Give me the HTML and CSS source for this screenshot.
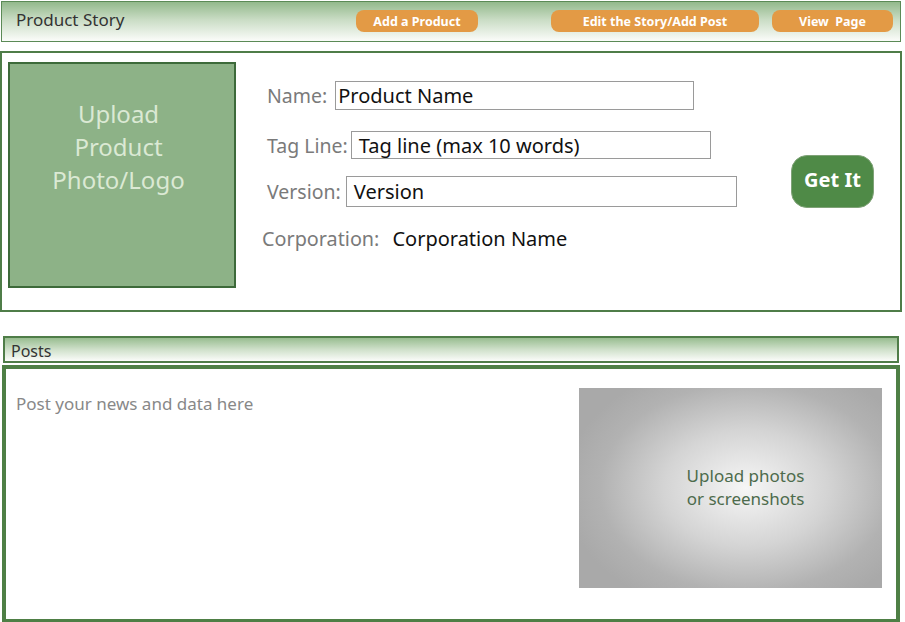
FILE: index.html
```html
<!DOCTYPE html>
<html>
<head>
<meta charset="utf-8">
<link rel="stylesheet" href="styles.css">
</head>
<body>
<div class="page">
  <header class="topbar">
    <span class="topbar-title">Product Story</span>
    <button class="pill pill-add">Add a Product</button>
    <button class="pill pill-edit">Edit the Story/Add Post</button>
    <button class="pill pill-view">View&nbsp; Page</button>
  </header>

  <section class="story">
    <div class="logo-box">Upload<br>Product<br>Photo/Logo</div>
    <div class="fields">
      <div class="row row-name"><span class="label">Name:</span><div class="field field-name">Product Name</div></div>
      <div class="row row-tag"><span class="label">Tag Line:</span><div class="field field-tag">Tag line (max 10 words)</div></div>
      <div class="row row-version"><span class="label">Version:</span><div class="field field-version">Version</div></div>
      <div class="row row-corp"><span class="label">Corporation:</span><span class="value">Corporation Name</span></div>
    </div>
    <button class="get-it">Get It</button>
  </section>

  <div class="posts-bar">Posts</div>
  <section class="posts">
    <div class="posts-text">Post your news and data here</div>
    <div class="shots">Upload photos<br>or screenshots</div>
  </section>
</div>
</body>
</html>
```

FILE: styles.css
```css
* { box-sizing: border-box; }
html, body { margin: 0; padding: 0; background: #fff; }
body { font-family: "Noto Sans", "Open Sans", sans-serif; width: 905px; height: 622px; overflow: hidden; }
.page { padding-top: 1px; }

.topbar {
  margin-left: 1px;
  width: 900px;
  height: 41px;
  border: 1px solid #5b8a56;
  background: linear-gradient(to bottom, #93b98c 0%, #c9dcc4 45%, #fbfcfa 100%);
  display: flex;
  align-items: center;
  padding-left: 14px;
}
.topbar-title { font-size: 17px; color: #333; width: 340px; margin-top: -4px; }
.pill {
  border: none;
  background: #e39a45;
  color: #fff;
  font-family: "Noto Sans", sans-serif;
  font-weight: bold;
  font-size: 12.5px;
  height: 22px;
  border-radius: 8px;
  padding: 0;
  margin-top: -1px;
}
.pill-add { width: 122px; }
.pill-edit { width: 208px; margin-left: 73px; }
.pill-view { width: 121px; margin-left: 13px; }

.story {
  margin-top: 9px;
  width: 902px;
  height: 261px;
  border: 2px solid #4f7d48;
  display: flex;
  align-items: flex-start;
  padding: 9px 0 0 6px;
}
.logo-box {
  width: 228px;
  height: 226px;
  background: #8db287;
  border: 2px solid #3d6a3a;
  color: #dbe9d4;
  font-size: 24px;
  line-height: 33px;
  text-align: center;
  padding-top: 33px;
  padding-right: 7px;
}
.fields {
  flex: 1;
  padding-left: 26px;
  padding-top: 19px;
  display: flex;
  flex-direction: column;
}
.row { display: flex; align-items: center; padding-left: 5px; }
.label { font-size: 19.5px; color: #7a7a7a; }
.field {
  border: 1px solid #9a9a9a;
  font-size: 20px;
  color: #111;
  padding-left: 2px;
  display: flex;
  align-items: center;
}
.field-name { width: 359px; height: 29px; margin-left: 8px; }
.field-tag { width: 360px; height: 28px; margin-left: 3px; padding-left: 7px; }
.field-version { width: 391px; height: 31px; margin-left: 5px; padding-left: 7px; }
.row-tag { margin-top: 21px; }
.row-version { margin-top: 17px; }
.row-corp { margin-top: 18px; padding-left: 0; }
.row-corp .label { font-size: 19.8px; }
.value { font-size: 20px; color: #111; margin-left: 13px; }

.get-it {
  align-self: center;
  margin-right: 26px;
  margin-top: -9px;
  width: 83px;
  height: 53px;
  border: 1px solid #7fa277;
  border-radius: 16px;
  background: #4f8a47;
  color: #fff;
  font-family: "Noto Sans", sans-serif;
  font-weight: bold;
  font-size: 20px;
  padding: 0 0 4px 0;
}

.posts-bar {
  margin: 24px 0 0 3px;
  width: 896px;
  height: 27px;
  border: 2px solid #4f7d48;
  background: linear-gradient(to bottom, #98bd90 0%, #cfe0ca 50%, #fbfcfa 100%);
  font-size: 16px;
  color: #333;
  padding-left: 6px;
  line-height: 26px;
}
.posts {
  margin: 2px 0 0 2px;
  width: 898px;
  height: 258px;
  border: 4px solid #4e7f45;
  display: flex;
  justify-content: space-between;
  align-items: flex-start;
  padding: 19px 14px 0 10px;
}
.posts-text { font-size: 17px; color: #888; margin-top: 4px; }
.shots {
  width: 303px;
  height: 200px;
  background: radial-gradient(ellipse 60% 65% at 55% 50%, #f6f6f6 0%, #d4d4d4 45%, #b2b2b2 80%, #a9a9a9 100%);
  color: #4d6b4c;
  font-size: 17px;
  line-height: 23px;
  display: flex;
  align-items: center;
  justify-content: center;
  text-align: center;
  padding-left: 30px;
  padding-bottom: 2px;
}
```
